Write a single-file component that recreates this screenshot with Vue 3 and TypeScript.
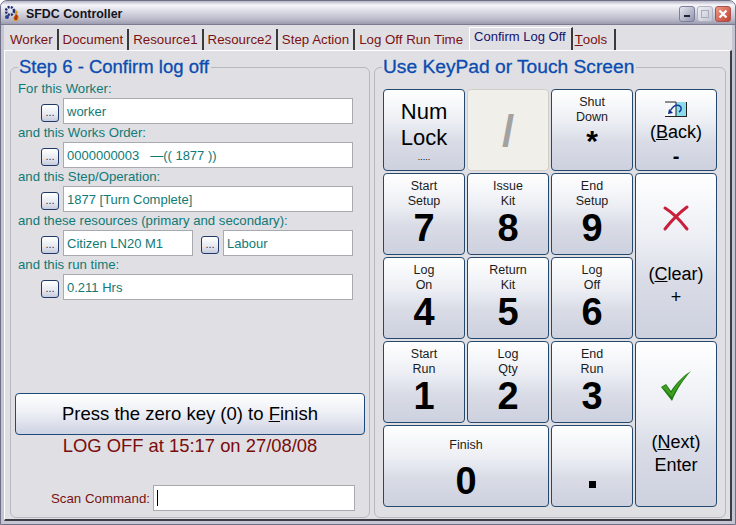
<template>
  <div class="window">
    <header class="titlebar">
      <svg class="app-icon" width="18" height="18" viewBox="0 0 18 18">
        <circle cx="6" cy="6" r="4" fill="none" stroke="#1c2a6a" stroke-width="2.4" stroke-dasharray="2 1.2" />
        <circle cx="6" cy="6" r="1.4" fill="#dfe3f5" />
        <circle cx="3" cy="12" r="2" fill="#2f3f90" />
        <path d="M11 4l3 3-1 3 2 2-1 4h-4l-1-3 2-3z" fill="#d8a020" />
        <path d="M12 9l2 2-1 4h-2l-1-2z" fill="#b03010" />
      </svg>
      <span class="title-text">SFDC Controller</span>
      <div class="win-buttons">
        <span class="win-btn">
          <svg width="10" height="10" viewBox="0 0 10 10"><rect x="2" y="6" width="6" height="2" fill="#20243a" /></svg>
        </span>
        <span class="win-btn off">
          <svg width="10" height="10" viewBox="0 0 10 10"><rect x="1.5" y="1.5" width="7" height="7" fill="none" stroke="#a8abbc" /></svg>
        </span>
        <span class="win-btn close">
          <svg width="10" height="10" viewBox="0 0 10 10"><path d="M1.5 1.5l7 7M8.5 1.5l-7 7" stroke="#fff" stroke-width="2.2" /></svg>
        </span>
      </div>
    </header>

    <div class="client">
      <nav class="tabs">
        <span
          v-for="tab in tabs"
          :key="tab.label"
          class="tab"
          :class="{ active: tab.active }"
        >
          <u v-if="tab.hot">{{ tab.hot }}</u>{{ tab.label }}
        </span>
      </nav>

      <main class="panel">
        <section class="group left">
          <h2 class="legend">Step 6 - Confirm log off</h2>

          <div v-for="field in fields" :key="field.label" class="field">
            <div class="field-label">{{ field.label }}</div>
            <div class="field-row">
              <template v-for="(value, i) in field.values" :key="i">
                <button class="dots">...</button>
                <div class="text-box" :class="{ second: i > 0 }">{{ value }}</div>
              </template>
            </div>
          </div>

          <button class="finish-btn">Press the zero key (0) to <u>F</u>inish</button>
          <div class="status">LOG OFF at 15:17 on 27/08/08</div>
          <div class="scan-row">
            <label class="scan-label">Scan Command:</label>
            <div class="scan-box"><span class="caret"></span></div>
          </div>
        </section>

        <section class="group right">
          <h2 class="legend">Use KeyPad or Touch Screen</h2>

          <div class="keypad">
            <button class="key">
              <span class="big-word">Num<br />Lock</span>
              <span class="tiny">.....</span>
            </button>
            <button class="key disabled"><span class="slash">/</span></button>
            <button class="key">
              <span class="cap">Shut<br />Down</span>
              <span class="star">*</span>
            </button>
            <button class="key back">
              <svg width="24" height="16" viewBox="0 0 24 16">
                <rect x="1" y="1" width="11" height="14" fill="#f6f6f6" />
                <rect x="12" y="1" width="10" height="14" fill="#8adcec" />
                <path d="M1 15.5h22M22.5 1v15M12 1v14M1 1h11" fill="none" stroke="#222" />
                <path d="M4 13l1-5 4 4z" fill="#0e2c8c" />
                <path d="M6.5 9.5C9 5 12 3.5 15 4.5c3 1 3 5 0 6.5" fill="none" stroke="#123a9a" stroke-width="1.5" />
              </svg>
              <span class="word">(<u>B</u>ack)</span>
              <span class="sign">-</span>
            </button>

            <button v-for="k in topDigits" :key="k.digit" class="key">
              <span class="cap">{{ k.top }}<br />{{ k.bottom }}</span>
              <span class="digit">{{ k.digit }}</span>
            </button>

            <button class="key tall clear">
              <svg width="28" height="28" viewBox="0 0 28 28">
                <path d="M3 4c8 5 15 12 22 21M25 3C17 9 10 16 3 25" fill="none" stroke="#c8203c" stroke-width="3" stroke-linecap="round" />
              </svg>
              <span class="word">(<u>C</u>lear)</span>
              <span class="word">+</span>
            </button>

            <button v-for="k in midDigits" :key="k.digit" class="key">
              <span class="cap">{{ k.top }}<br />{{ k.bottom }}</span>
              <span class="digit">{{ k.digit }}</span>
            </button>

            <button v-for="k in lowDigits" :key="k.digit" class="key">
              <span class="cap">{{ k.top }}<br />{{ k.bottom }}</span>
              <span class="digit">{{ k.digit }}</span>
            </button>

            <button class="key tall enter">
              <svg width="32" height="30" viewBox="0 0 32 30">
                <path d="M1 16l5-3 5 7C16 12 23 5 31 0 24 8 17 18 12 30z" fill="#1f7a12" />
                <path d="M2 16l4-2 5 8C16 13 23 6 29 2 22 9 16 18 12 26z" fill="#3f9f22" />
              </svg>
              <span class="word">(<u>N</u>ext)</span>
              <span class="word">Enter</span>
            </button>

            <button class="key wide">
              <span class="cap">Finish</span>
              <span class="digit">0</span>
            </button>
            <button class="key"><span class="dot"></span></button>
          </div>
        </section>
      </main>
    </div>
  </div>
</template>

<script setup lang="ts">
interface Tab {
  label: string;
  hot?: string;
  active?: boolean;
}

interface Field {
  label: string;
  values: string[];
}

interface DigitKey {
  top: string;
  bottom: string;
  digit: string;
}

const tabs: Tab[] = [
  { label: 'Worker' },
  { label: 'Document' },
  { label: 'Resource1' },
  { label: 'Resource2' },
  { label: 'Step Action' },
  { label: 'Log Off Run Time' },
  { label: 'Confirm Log Off', active: true },
  { label: 'ools', hot: 'T' },
];

const fields: Field[] = [
  { label: 'For this Worker:', values: ['worker'] },
  { label: 'and this Works Order:', values: ['0000000003\u00a0\u00a0\u00a0\u2014(( 1877 ))'] },
  { label: 'and this Step/Operation:', values: ['1877 [Turn Complete]'] },
  { label: 'and these resources (primary and secondary):', values: ['Citizen LN20 M1', 'Labour'] },
  { label: 'and this run time:', values: ['0.211 Hrs'] },
];

const topDigits: DigitKey[] = [
  { top: 'Start', bottom: 'Setup', digit: '7' },
  { top: 'Issue', bottom: 'Kit', digit: '8' },
  { top: 'End', bottom: 'Setup', digit: '9' },
];

const midDigits: DigitKey[] = [
  { top: 'Log', bottom: 'On', digit: '4' },
  { top: 'Return', bottom: 'Kit', digit: '5' },
  { top: 'Log', bottom: 'Off', digit: '6' },
];

const lowDigits: DigitKey[] = [
  { top: 'Start', bottom: 'Run', digit: '1' },
  { top: 'Log', bottom: 'Qty', digit: '2' },
  { top: 'End', bottom: 'Run', digit: '3' },
];
</script>

<style>
html,
body {
  margin: 0;
  background: #fff;
}
</style>

<style scoped>
.window {
  box-sizing: border-box;
  width: 736px;
  height: 525px;
  display: flex;
  flex-direction: column;
  background: #c4c4d2;
  border: 1px solid #6f6f86;
  border-radius: 7px 7px 0 0;
  font-family: 'Liberation Sans', Arial, sans-serif;
  overflow: hidden;
}

.titlebar {
  box-sizing: border-box;
  height: 24px;
  flex: none;
  display: flex;
  align-items: center;
  padding: 3px 4px 0 3px;
  background: linear-gradient(#b4b4c6 0, #f6f6fa 4px, #dcdce6 10px, #bcbccc 18px, #9c9cb0 23px);
  border-bottom: 1px solid #7c7c90;
}

.app-icon {
  flex: none;
}

.title-text {
  margin-left: 4px;
  font-size: 12.4px;
  font-weight: 700;
  color: #14141c;
}

.win-buttons {
  margin-left: auto;
  display: flex;
  gap: 2px;
}

.win-btn {
  box-sizing: border-box;
  width: 16px;
  height: 16px;
  display: flex;
  align-items: center;
  justify-content: center;
  border-radius: 3px;
  border: 1px solid #7c7f9c;
  background: linear-gradient(135deg, #e6e7ef, #8f92ac);
}

.win-btn.off {
  border-color: #b0b2c4;
  background: linear-gradient(135deg, #eeeef3, #c2c4d2);
}

.win-btn.close {
  border-color: #a85050;
  background: linear-gradient(135deg, #ee9a88, #c2402f);
}

.client {
  flex: 1;
  min-height: 0;
  display: flex;
  flex-direction: column;
  margin: 0 3px 3px;
  background: #e0dfe3;
}

.tabs {
  height: 25px;
  flex: none;
  display: flex;
  align-items: flex-end;
  padding-left: 2px;
}

.tab {
  box-sizing: border-box;
  height: 21px;
  display: flex;
  align-items: center;
  padding: 0 4px;
  font-size: 13.3px;
  color: #7a1212;
  border-right: 2px solid #3a3a3a;
  white-space: pre;
}

.tab:has(+ .active) {
  border-right-color: transparent;
}

.tab.active {
  height: 23px;
  padding: 0 5px 0 4px;
  align-items: flex-start;
  border-top: 1px solid #fff;
  border-left: 1px solid #fff;
  font-size: 13px;
  line-height: 18px;
  color: #14146e;
}

.tab:last-child {
  padding: 0 7px 0 2px;
}

.panel {
  flex: 1;
  min-height: 0;
  display: flex;
  gap: 4px;
  padding: 16px 4px 1px 5px;
  border-top: 1px solid #fff;
  border-left: 1px solid #fff;
  border-right: 2px solid #3c3c44;
  border-bottom: 2px solid #3c3c44;
}

.group {
  box-sizing: border-box;
  display: flex;
  flex-direction: column;
  border: 1px solid #b8b8c0;
  border-radius: 6px;
}

.group.left {
  width: 360px;
}

.group.right {
  width: 352px;
}

.legend {
  width: fit-content;
  margin: -12px 0 2px 7px;
  padding: 0 2px 0 1px;
  font-size: 18.5px;
  line-height: 22px;
  font-weight: 400;
  color: #0a4cb0;
  background: #e0dfe3;
  -webkit-text-stroke: 0.3px #0a4cb0;
}

.right .legend {
  font-size: 19.2px;
}

.field-label {
  height: 18px;
  padding-left: 7px;
  font-size: 13.2px;
  line-height: 18px;
  color: #0f7a76;
  white-space: nowrap;
}

.field-row {
  display: flex;
  align-items: flex-end;
  padding: 0 16px 0 30px;
}

.dots {
  box-sizing: border-box;
  flex: none;
  width: 18px;
  height: 18px;
  margin: 0 4px 2px 0;
  padding: 0 0 2px;
  border: 1px solid #1d3a6a;
  border-radius: 3px;
  font-family: inherit;
  font-size: 11px;
  line-height: 1;
  color: #333;
  background: linear-gradient(#fff, #e6e8f0 60%, #c6cbdc);
}

.text-box {
  box-sizing: border-box;
  flex: 1 1 0;
  height: 26px;
  padding: 1px 0 0 3px;
  border: 1px solid #a9a9b0;
  background: #fff;
  font-size: 13px;
  line-height: 24px;
  color: #0f7a76;
  white-space: pre;
}

.text-box.second {
  flex: none;
  width: 130px;
}

.text-box:not(.second):not(:last-child) {
  margin-right: 8px;
}

.finish-btn {
  box-sizing: border-box;
  flex: none;
  height: 42px;
  margin: auto 4px 0 4px;
  border: 1px solid #1d4a7a;
  border-radius: 4px;
  font-family: inherit;
  font-size: 18.5px;
  color: #000;
  background: linear-gradient(#fff, #eef0f6 45%, #cfd3e2);
}

.status {
  height: 22px;
  font-size: 18.4px;
  line-height: 22px;
  text-align: center;
  color: #7a0c0c;
}

.scan-row {
  display: flex;
  align-items: center;
  justify-content: flex-end;
  gap: 3px;
  margin: 28px 14px 6px 0;
}

.scan-label {
  font-size: 13.3px;
  color: #7a1212;
}

.scan-box {
  box-sizing: border-box;
  width: 202px;
  height: 26px;
  padding: 4px 3px;
  border: 1px solid #a9a9b0;
  background: #fff;
}

.caret {
  display: block;
  width: 1px;
  height: 16px;
  background: #000;
}

.keypad {
  display: grid;
  grid-template-columns: repeat(4, 82px);
  grid-template-rows: repeat(5, 82px);
  gap: 2px;
  margin: 9px 0 0 8px;
}

.key {
  box-sizing: border-box;
  display: flex;
  flex-direction: column;
  align-items: center;
  justify-content: flex-start;
  padding: 5px 0 0;
  border: 1px solid #24486e;
  border-radius: 4px;
  font-family: inherit;
  color: #000;
  background: linear-gradient(#fff, #eceef4 40%, #d9dce6 65%, #cdd1de);
}

.key.disabled {
  border-color: #cfcfc8;
  background: #f0efea;
  justify-content: center;
  padding: 2px 0 0;
}

.key.tall {
  grid-row: span 2;
  grid-column: 4;
}

.key.wide {
  grid-column: span 2;
}

.cap {
  font-size: 12.5px;
  line-height: 14.5px;
  color: #1c1c1c;
}

.digit {
  font-size: 38px;
  line-height: 40px;
  font-weight: 700;
}

.wide .cap {
  margin-top: 7px;
}

.wide .digit {
  margin-top: 8px;
}

.big-word {
  margin-top: 4px;
  font-size: 22px;
  line-height: 26px;
}

.tiny {
  font-size: 9px;
  line-height: 10px;
  margin-top: 1px;
}

.slash {
  font-size: 44px;
  font-weight: 700;
  color: #a2a2a2;
}

.star {
  margin-top: 2px;
  font-size: 30px;
  line-height: 30px;
  font-weight: 700;
}

.back svg {
  margin-top: 6px;
}

.word {
  font-size: 18px;
  line-height: 23px;
}

.back .word {
  margin-top: 4px;
}

.sign {
  margin-top: 2px;
  font-size: 20px;
  line-height: 20px;
  font-weight: 700;
}

.clear svg {
  margin-top: 25px;
}

.enter svg {
  margin-top: 24px;
}

.clear .word:nth-of-type(1) {
  margin-top: 31px;
}

.enter .word:nth-of-type(1) {
  margin-top: 30px;
}

.dot {
  width: 7px;
  height: 7px;
  margin-top: 50px;
  background: #000;
}
</style>
